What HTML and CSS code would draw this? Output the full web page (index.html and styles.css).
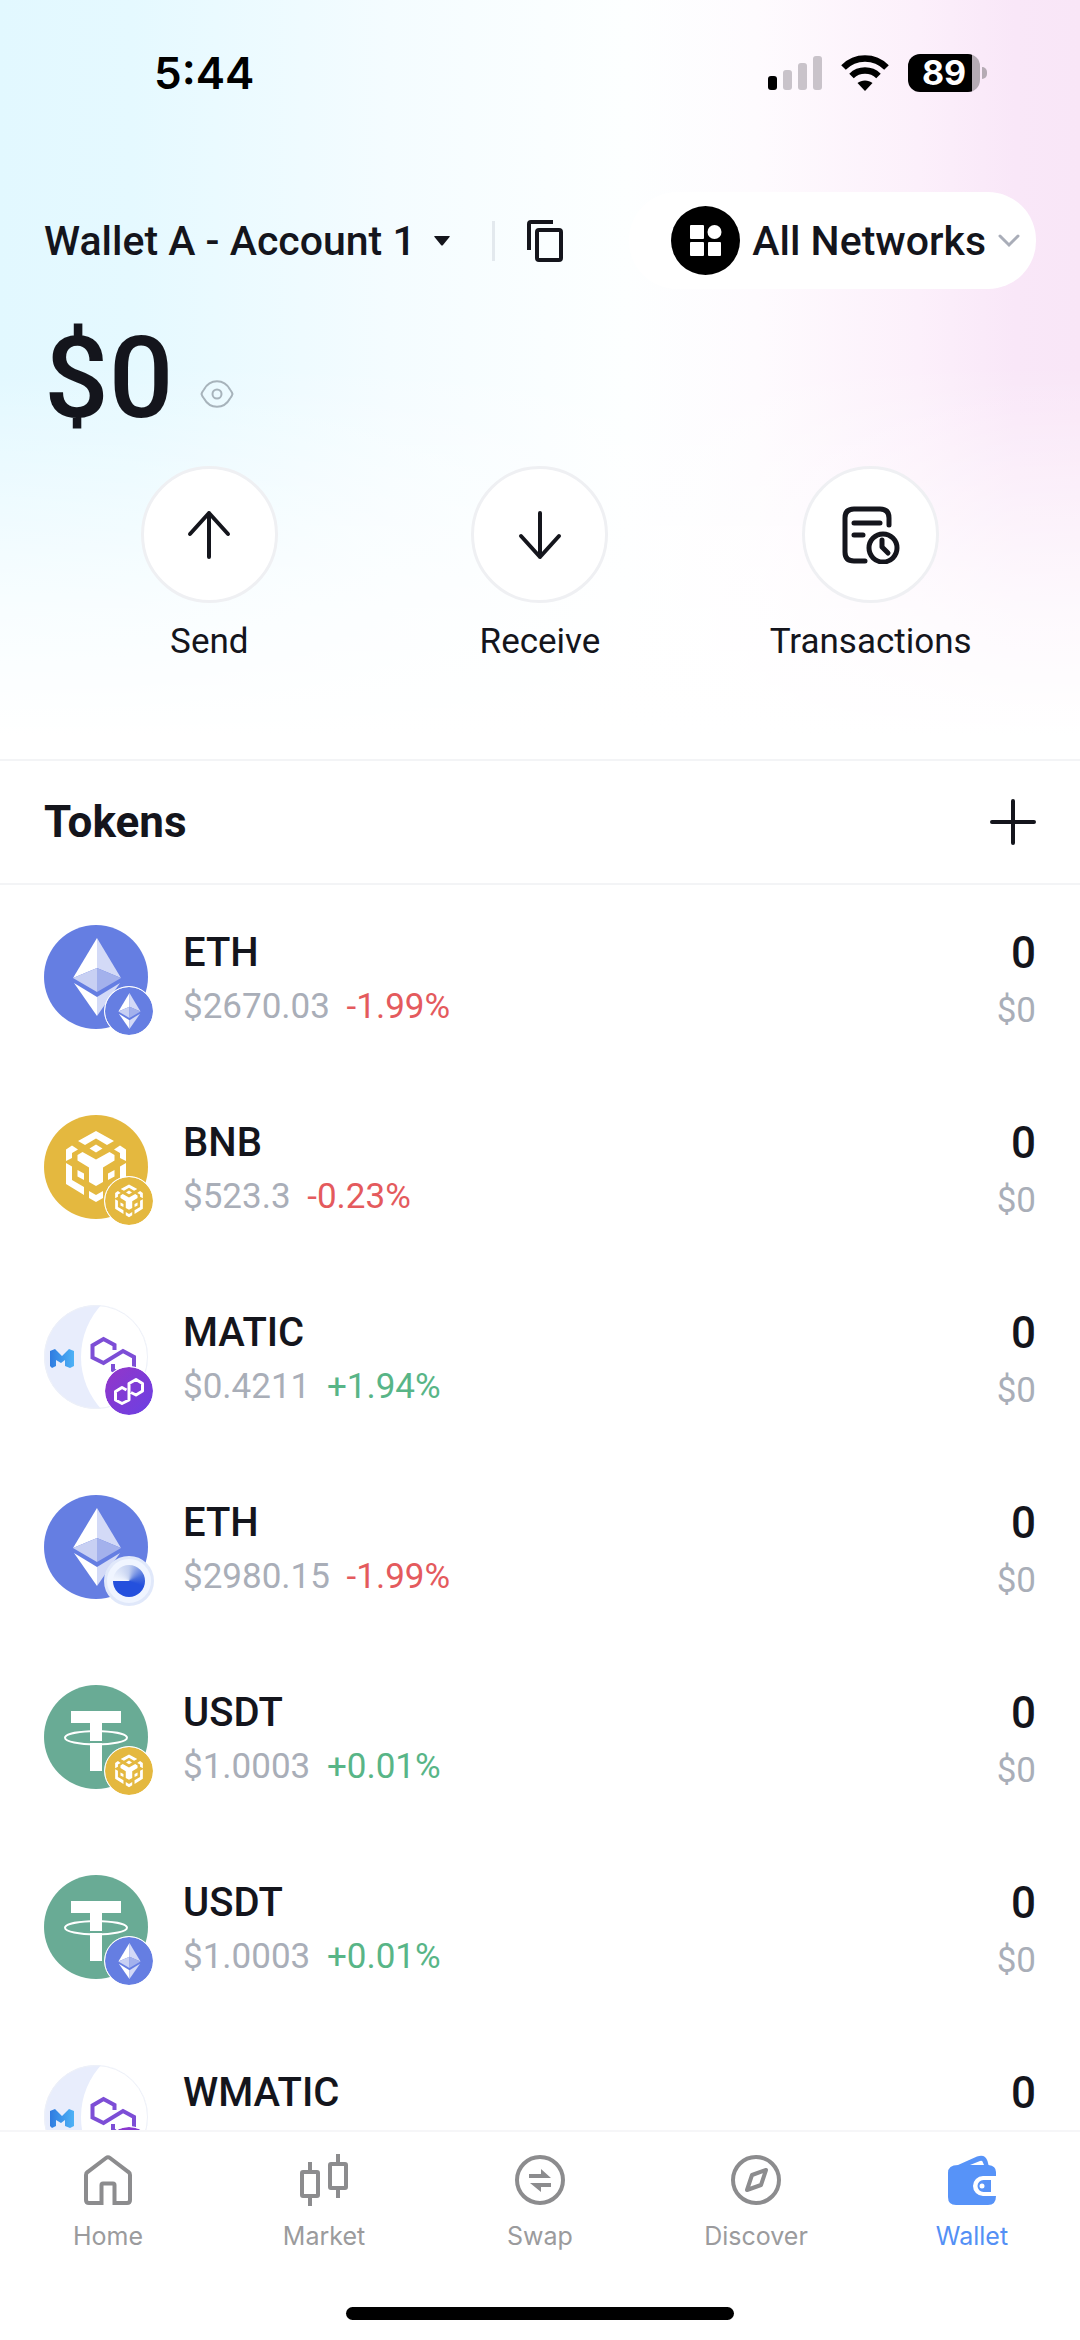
FILE: index.html
```html
<!DOCTYPE html>
<html lang="en">
<head>
    <meta charset="UTF-8">
    <meta name="viewport" content="width=device-width, initial-scale=1">
    <title>Wallet</title>
    <link rel="stylesheet" href="styles.css">
</head>
<body>
    <svg class="sprite" aria-hidden="true">
        <defs>
            <linearGradient id="grad-polygon" x1="0" y1="0" x2="1" y2="1">
                <stop offset="0" stop-color="#9436c8"/>
                <stop offset="1" stop-color="#6a40e4"/>
            </linearGradient>
            <linearGradient id="grad-m" x1="0" y1="0" x2="1" y2="0">
                <stop offset="0" stop-color="#2f7be0"/>
                <stop offset="1" stop-color="#4db2f6"/>
            </linearGradient>
            <clipPath id="clip-coin"><circle cx="52" cy="52" r="52"/></clipPath>
        </defs>
        <symbol id="eth" viewBox="0 0 104 104">
            <circle cx="52" cy="52" r="52" fill="#657ee2"/>
            <path fill="#fff" d="M53 13 29 53l24-10z"/>
            <path fill="#d3daf7" d="M53 13l24 40-24-10z"/>
            <path fill="#c8d0f3" d="M53 43 29 53l24 14z"/>
            <path fill="#a3b1ec" d="M53 43l24 10-24 14z"/>
            <path fill="#fff" d="M30 58l23 14v19z"/>
            <path fill="#d3daf7" d="M76 58 53 72v19z"/>
        </symbol>
        <symbol id="bnb" viewBox="0 0 104 104">
            <circle cx="52" cy="52" r="52" fill="#e4b83f"/>
            <g fill="#fff">
                <path d="M34 26l18-10 18 10-7 4-11-6.500-11 6.500z"/>
                <path d="M52 29.500l6.500 4-6.500 4-6.500-4z"/>
                <path d="M22 34.500l6-4 6 4-6 3.500v5l-6 3z"/>
                <path d="M82 34.500l-6-4-6 4 6 3.500v5l6 3z"/>
                <path d="M38.500 37 52 44.500 65.500 37l5 3v5.500L59 52.500V67l-7 4-7-4V52.500l-11.500-7V40z"/>
                <path d="M33.500 55l6.500 3.500V65l-6.500-3.500z"/>
                <path d="M70.500 55 64 58.500V65l6.500-3.500z"/>
                <path d="M22 48l6 3.500V65l12 7v8L22 69z"/>
                <path d="M82 48l-6 3.500V65l-12 7v8l18-11z"/>
                <path d="M45 76l7 4 7-4v7l-7 4-7-4z"/>
            </g>
        </symbol>
        <symbol id="usdt" viewBox="0 0 104 104">
            <circle cx="52" cy="52" r="52" fill="#69ab95"/>
            <path fill="#fff" d="M27 26h50v12H58v18H46V38H27zM46 58h12v28H46z"/>
            <path fill="none" stroke="#fff" stroke-width="2" d="M46 46.300c-15 .7-25 3.200-25 6.500 0 3.800 14 6.700 31 6.700s31-2.900 31-6.700c0-3.300-10-5.800-25-6.500"/>
        </symbol>
        <symbol id="matic" viewBox="0 0 104 104">
            <g clip-path="url(#clip-coin)">
                <rect width="104" height="104" fill="#e8edfc"/>
                <circle cx="114" cy="52" r="77" fill="#fff"/>
            </g>
            <circle cx="52" cy="52" r="51.500" fill="none" stroke="#eef1f8"/>
            <path fill="url(#grad-m)" d="M6 46l5-2 7 7 7-7 5 2v15l-4 2-5-2v-6l-4 3-5-3v6l-4 2-2-2z"/>
            <path fill="none" stroke="#7d4ed6" stroke-width="4" d="M70.500 45v-5l-11-6-11 6.500v12l11 5.500L79 46l11 6v13l-11 6-10-6v-6"/>
        </symbol>
        <symbol id="polygon" viewBox="0 0 48 48">
            <circle cx="24" cy="24" r="24" fill="url(#grad-polygon)"/>
            <path fill="none" stroke="#fff" stroke-width="3" stroke-linejoin="round" d="M21.500 23 17 20.500l-6.500 4V33l6.500 3.500 7-3.500V16.500l7-4 6.500 4V24l-6.500 4-5-2.500"/>
        </symbol>
    </svg>

    <div class="app">
        <header class="top">
            <div class="status-bar">
                <span class="time">5:44</span>
                <div class="status-icons">
                    <svg width="54" height="36" viewBox="0 0 54 36" aria-hidden="true">
                        <rect y="21" width="9" height="14" rx="3"/>
                        <g fill="#c9c3ca">
                            <rect x="15" y="15" width="9" height="20" rx="3"/>
                            <rect x="30" y="8" width="9" height="27" rx="3"/>
                            <rect x="45" y="1" width="9" height="34" rx="3"/>
                        </g>
                    </svg>
                    <svg width="48" height="36" viewBox="0 0 48 36" aria-hidden="true">
                        <path d="M24 36l-7.500-8c4-3.500 11-3.500 15 0z"/>
                        <path fill="none" stroke="#000" stroke-width="6.500" d="M2.500 12.500c12-12 31-12 43 0M10.500 21c7.500-7.200 19.500-7.200 27 0"/>
                    </svg>
                    <div class="battery"><span class="battery-level">89</span></div>
                </div>
            </div>

            <div class="account-row">
                <button class="account">
                    Wallet A - Account 1
                    <svg width="16" height="10" viewBox="0 0 16 10" aria-hidden="true"><path d="M1 0h14q1.500 0 .5 1L9 9q-1 1-2 0L.5 1Q-.5 0 1 0z" fill="#14151c"/></svg>
                </button>
                <span class="divider"></span>
                <button class="copy" aria-label="Copy address">
                    <svg width="36" height="42" viewBox="0 0 36 42" fill="none" stroke="#14151c" stroke-width="4" aria-hidden="true">
                        <path d="M2 30V4q0-2 2-2h22"/>
                        <rect x="10" y="10" width="24" height="30" rx="2"/>
                    </svg>
                </button>
                <button class="network">
                    <svg width="69" height="69" viewBox="0 0 69 69" aria-hidden="true">
                        <circle cx="34.500" cy="34.500" r="34.500"/>
                        <g fill="#fff">
                            <rect x="19" y="19" width="14" height="14" rx="1"/>
                            <circle cx="43.500" cy="26" r="7"/>
                            <rect x="19" y="36" width="14" height="14" rx="1"/>
                            <rect x="37" y="36" width="13" height="14" rx="1"/>
                        </g>
                    </svg>
                    <span>All Networks</span>
                    <svg width="22" height="14" viewBox="0 0 22 14" aria-hidden="true"><path d="M2 2l9 9 9-9" fill="none" stroke="#a9adb8" stroke-width="3" stroke-linecap="round"/></svg>
                </button>
            </div>

            <div class="balance">
                <span class="balance-value">$0</span>
                <button class="eye" aria-label="Hide balance">
                    <svg width="34" height="28" viewBox="0 0 34 28" fill="none" stroke="#a7b3bb" stroke-width="2" aria-hidden="true">
                        <path d="M1.500 14Q2 12 4 9.500C10-1.500 24-1.500 30 9.500q2 2.500 2.500 4.500-.5 2-2.500 4.500C24 29.500 10 29.500 4 18.500 2 16 1.500 14 1.500 14z"/>
                        <circle cx="17" cy="14" r="4.500"/>
                    </svg>
                </button>
            </div>

            <nav class="actions">
                <button class="action">
                    <span class="action-icon">
                        <svg width="44" height="50" viewBox="0 0 44 50" aria-hidden="true"><path d="M22 47V3M3 24 22 3l19 21"/></svg>
                    </span>
                    Send
                </button>
                <button class="action">
                    <span class="action-icon">
                        <svg width="44" height="50" viewBox="0 0 44 50" aria-hidden="true"><path d="M22 3v44M3 26l19 21 19-21"/></svg>
                    </span>
                    Receive
                </button>
                <button class="action">
                    <span class="action-icon history">
                        <svg width="58" height="58" viewBox="0 0 58 58" aria-hidden="true">
                            <path d="M47 19v-7q0-9-9-9H12q-9 0-9 9v34q0 9 9 9h11M12 17h26M12 29h9"/>
                            <circle cx="41" cy="42" r="14"/>
                            <path d="M40 34v7l6 6"/>
                        </svg>
                    </span>
                    Transactions
                </button>
            </nav>
        </header>

        <div class="section-head">
            <h2>Tokens</h2>
            <button class="add" aria-label="Add token">
                <svg width="46" height="46" viewBox="0 0 46 46" aria-hidden="true"><path d="M23 2v42M2 23h42" stroke="#14151c" stroke-width="4" stroke-linecap="round"/></svg>
            </button>
        </div>

        <ul class="tokens">
            <li class="token">
                <div class="coin">
                    <svg class="logo"><use href="#eth"/></svg>
                    <svg class="badge"><use href="#eth"/></svg>
                </div>
                <div class="info">
                    <div class="name">ETH</div>
                    <div class="price">$2670.03 <span class="down">-1.99%</span></div>
                </div>
                <div class="amount">
                    <div class="count">0</div>
                    <div class="value">$0</div>
                </div>
            </li>
            <li class="token">
                <div class="coin">
                    <svg class="logo"><use href="#bnb"/></svg>
                    <svg class="badge"><use href="#bnb"/></svg>
                </div>
                <div class="info">
                    <div class="name">BNB</div>
                    <div class="price">$523.3 <span class="down">-0.23%</span></div>
                </div>
                <div class="amount">
                    <div class="count">0</div>
                    <div class="value">$0</div>
                </div>
            </li>
            <li class="token">
                <div class="coin">
                    <svg class="logo"><use href="#matic"/></svg>
                    <svg class="badge"><use href="#polygon"/></svg>
                </div>
                <div class="info">
                    <div class="name">MATIC</div>
                    <div class="price">$0.4211 <span class="up">+1.94%</span></div>
                </div>
                <div class="amount">
                    <div class="count">0</div>
                    <div class="value">$0</div>
                </div>
            </li>
            <li class="token">
                <div class="coin">
                    <svg class="logo"><use href="#eth"/></svg>
                    <span class="badge badge-base"></span>
                </div>
                <div class="info">
                    <div class="name">ETH</div>
                    <div class="price">$2980.15 <span class="down">-1.99%</span></div>
                </div>
                <div class="amount">
                    <div class="count">0</div>
                    <div class="value">$0</div>
                </div>
            </li>
            <li class="token">
                <div class="coin">
                    <svg class="logo"><use href="#usdt"/></svg>
                    <svg class="badge"><use href="#bnb"/></svg>
                </div>
                <div class="info">
                    <div class="name">USDT</div>
                    <div class="price">$1.0003 <span class="up">+0.01%</span></div>
                </div>
                <div class="amount">
                    <div class="count">0</div>
                    <div class="value">$0</div>
                </div>
            </li>
            <li class="token">
                <div class="coin">
                    <svg class="logo"><use href="#usdt"/></svg>
                    <svg class="badge"><use href="#eth"/></svg>
                </div>
                <div class="info">
                    <div class="name">USDT</div>
                    <div class="price">$1.0003 <span class="up">+0.01%</span></div>
                </div>
                <div class="amount">
                    <div class="count">0</div>
                    <div class="value">$0</div>
                </div>
            </li>
            <li class="token">
                <div class="coin">
                    <svg class="logo"><use href="#matic"/></svg>
                    <svg class="badge"><use href="#polygon"/></svg>
                </div>
                <div class="info">
                    <div class="name">WMATIC</div>
                </div>
                <div class="amount">
                    <div class="count">0</div>
                </div>
            </li>
        </ul>

        <footer class="bottom">
            <nav class="tabs">
                <a class="tab" href="#home">
                    <svg viewBox="0 0 52 52" aria-hidden="true"><path d="M19.500 49H7q-3 0-3-3V21q0-2 1.500-3L24 4q2-1.500 4 0l18.500 14Q48 19 48 21v25q0 3-3 3H32.500V31q0-1.500-1.500-1.500H21q-1.500 0-1.500 1.500z"/></svg>
                    Home
                </a>
                <a class="tab" href="#market">
                    <svg viewBox="0 0 52 52" aria-hidden="true"><rect x="4" y="18" width="16" height="24" rx="1"/><rect x="32" y="10" width="16" height="24" rx="1"/><path d="M12 8v9M12 43v9M40 0v9M40 35v9"/></svg>
                    Market
                </a>
                <a class="tab" href="#swap">
                    <svg viewBox="0 0 52 52" aria-hidden="true"><circle cx="26" cy="26" r="23"/><path class="solid" d="M15 20h12v-5l10 9H15zM37 29v4H27v5l-11-9z"/></svg>
                    Swap
                </a>
                <a class="tab" href="#discover">
                    <svg viewBox="0 0 52 52" aria-hidden="true"><circle cx="26" cy="26" r="23"/><path stroke-linejoin="round" d="M22 21l14-5-5 15-14 5z"/></svg>
                    Discover
                </a>
                <a class="tab active" href="#wallet">
                    <svg viewBox="0 0 52 52" aria-hidden="true">
                        <path class="solid" fill-rule="evenodd" d="M12 11 31 2.500Q39-.5 41.500 7l1 4Q50 12 50 18v4H37a10 10 0 0 0 0 20h13q0 9-8 9H10q-8 0-8-8V19q0-8 10-8zM24 11h14l-1.500-3.500Q36 6.500 34 7z"/>
                        <path class="solid" fill-rule="evenodd" d="M45 26h-7.500a6 6 0 0 0 0 12H45zM36 29.500a2.500 2.500 0 1 1 0 5 2.500 2.500 0 0 1 0-5z"/>
                    </svg>
                    Wallet
                </a>
            </nav>
            <div class="home-indicator"></div>
        </footer>
    </div>
</body>
</html>
```
FILE: styles.css
```css
* {
    box-sizing: border-box;
}
body {
    margin: 0;
    font-family: Roboto, "Liberation Sans", sans-serif;
    color: #14151c;
    background-color: #fff;
}
button {
    display: flex;
    align-items: center;
    padding: 0;
    border: none;
    background: none;
    color: inherit;
    font: inherit;
    cursor: pointer;
}
svg {
    display: block;
    flex: none;
}
.sprite {
    position: absolute;
    width: 0;
    height: 0;
}
.app {
    display: flex;
    flex-direction: column;
    height: 100vh;
    overflow: hidden;
}

/* header */
.top {
    flex: none;
    padding: 0 44px 97px;
    background:
        linear-gradient(to bottom, rgba(255, 255, 255, 0) 48%, rgba(255, 255, 255, 0.75) 80%, #fff 97%),
        linear-gradient(to right, #e2f8ff 0%, #e5f9ff 12%, #f4fcff 36%, #fdffff 58%, #fefbfe 70%, #fcf0fb 85%, #f9e7f8 94%, #f9e6f7 100%);
}
.status-bar {
    display: flex;
    justify-content: space-between;
    align-items: center;
    height: 146px;
    padding: 0 49px 0 110px;
    font-family: Inter, "Liberation Sans", sans-serif;
    color: #000;
}
.time {
    font-size: 44px;
    font-weight: 600;
}
.status-icons {
    display: flex;
    align-items: center;
    gap: 19px;
}
.battery {
    position: relative;
    width: 72px;
    height: 38px;
    margin-right: 7px;
    border-radius: 12px;
    background: linear-gradient(to right, #000 64px, #b5abb4 64px);
    text-align: center;
}
.battery::after {
    content: "";
    position: absolute;
    right: -7px;
    top: 13px;
    width: 5px;
    height: 12px;
    border-radius: 0 6px 6px 0;
    background-color: #b5abb4;
}
.battery-level {
    font-size: 34px;
    font-weight: 700;
    line-height: 38px;
    color: #fff;
}
.account-row {
    display: flex;
    align-items: center;
    height: 97px;
    margin-top: 46px;
    font-size: 41px;
    font-weight: 500;
}
.account {
    gap: 18px;
}
.divider {
    width: 3px;
    height: 40px;
    margin: 0 32px 0 42px;
    background-color: #e3e9ee;
}
.network {
    gap: 12px;
    height: 97px;
    margin-left: auto;
    padding: 0 16px 0 42px;
    border-radius: 48px;
    background-color: #fff;
}
.balance {
    display: flex;
    align-items: center;
    gap: 26px;
    margin-top: 29px;
}
.balance-value {
    font-size: 114px;
    font-weight: 500;
    line-height: 120px;
}
.eye {
    margin-top: 32px;
}
.actions {
    display: grid;
    grid-template-columns: repeat(3, 1fr);
    margin-top: 28px;
}
.action {
    flex-direction: column;
    gap: 19px;
    font-size: 35px;
    line-height: 40px;
}
.action-icon {
    display: flex;
    align-items: center;
    justify-content: center;
    width: 137px;
    height: 137px;
    border: 3px solid #eff0f3;
    border-radius: 50%;
    background-color: #fff;
}
.action-icon svg {
    fill: none;
    stroke: #14151c;
    stroke-width: 4;
    stroke-linecap: round;
    stroke-linejoin: round;
}
.history svg {
    stroke-width: 5;
}

/* token list */
.section-head {
    display: flex;
    flex: none;
    justify-content: space-between;
    align-items: center;
    height: 126px;
    padding: 0 44px;
    border-top: 2px solid #f3f4f6;
    border-bottom: 2px solid #f3f4f6;
}
h2 {
    margin: 0;
    font-size: 44px;
    font-weight: 700;
}
.tokens {
    flex: 1;
    min-height: 0;
    margin: 0;
    padding: 0;
    overflow-y: auto;
    scrollbar-width: none;
    list-style: none;
}
.token {
    display: flex;
    align-items: flex-start;
    height: 190px;
    padding: 40px 44px 0;
}
.coin {
    position: relative;
    width: 104px;
    height: 104px;
    margin-right: 35px;
}
.logo {
    width: 104px;
    height: 104px;
}
.badge {
    position: absolute;
    right: -6px;
    bottom: -7px;
    width: 50px;
    height: 50px;
    border: 1px solid #fff;
    border-radius: 50%;
    background-color: #fff;
}
.badge-base {
    border: 3px solid #e0e8fa;
    background-color: #f0f5ff;
}
.badge-base::after {
    content: "";
    position: absolute;
    inset: 6px;
    border-radius: 50%;
    background: conic-gradient(from 270deg, #f4f8ff, #c3d0f0 90deg, #4a6fdc 160deg, #2450dd 200deg, #2450dd);
}
.info {
    flex: 1;
}
.name {
    font-size: 40px;
    font-weight: 500;
    line-height: 56px;
}
.price {
    font-size: 35px;
    line-height: 52px;
    color: #a9aeb8;
}
.price span {
    margin-left: 8px;
}
.price .up {
    color: #58b587;
}
.price .down {
    color: #e45a5d;
}
.amount {
    text-align: right;
}
.count {
    font-size: 44px;
    font-weight: 500;
    line-height: 56px;
}
.value {
    font-size: 35px;
    line-height: 60px;
    color: #a9aeb8;
}

/* bottom tabs */
.bottom {
    flex: none;
    padding-bottom: 20px;
    border-top: 2px solid #f6f6f8;
    background-color: #fff;
}
.tabs {
    display: grid;
    grid-template-columns: repeat(5, 1fr);
    padding: 22px 0 55px;
}
.tab {
    display: flex;
    flex-direction: column;
    align-items: center;
    gap: 14px;
    font-family: Inter, "Liberation Sans", sans-serif;
    font-size: 25px;
    line-height: 32px;
    color: #9b9b9d;
    text-decoration: none;
}
.tab svg {
    width: 52px;
    height: 52px;
    fill: none;
    stroke: #8c8c8e;
    stroke-width: 4;
}
.tab .solid {
    fill: #8c8c8e;
    stroke: none;
}
.tab.active {
    color: #5490f5;
}
.tab.active .solid {
    fill: #5793f8;
}
.home-indicator {
    width: 36%;
    height: 13px;
    margin: 0 auto;
    border-radius: 7px;
    background-color: #000;
}
```
